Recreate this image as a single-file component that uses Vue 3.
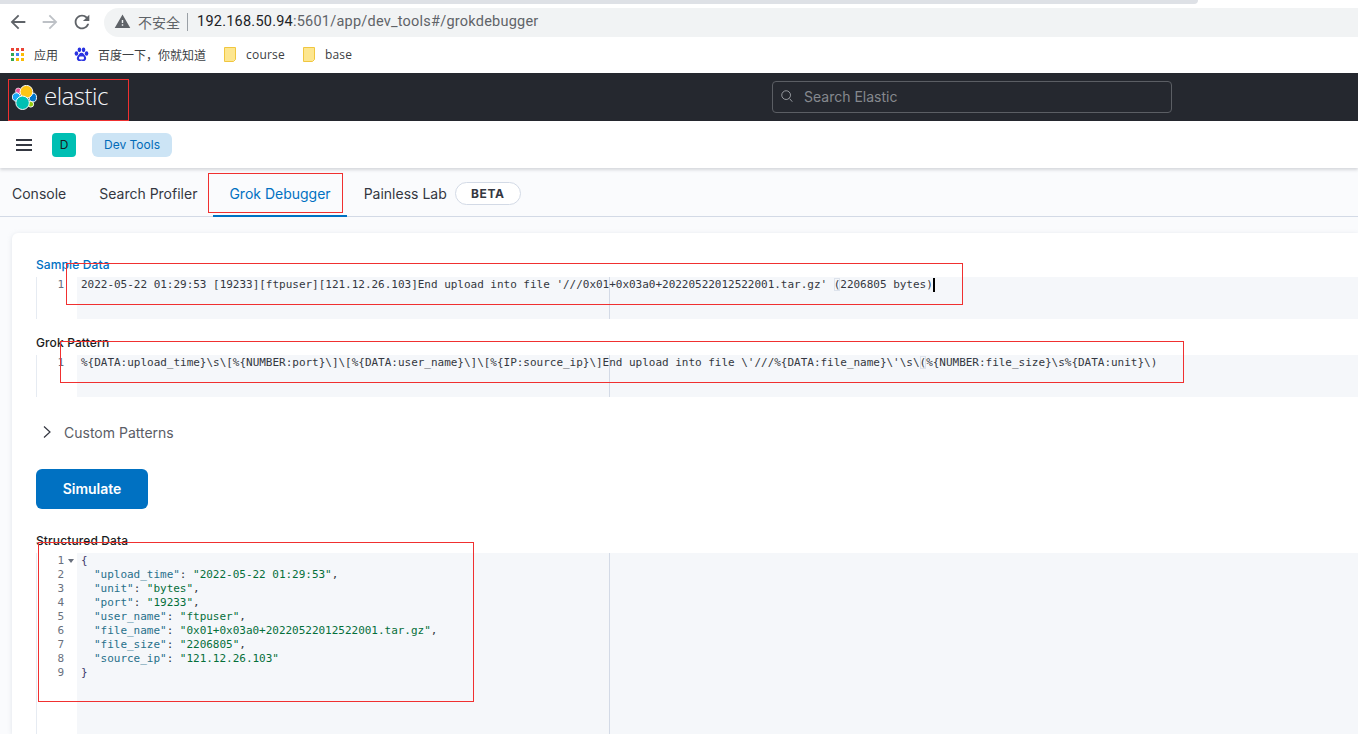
<script setup>
const sampleA = "2022-05-22 01:29:53 [19233][ftpuser][121.12.26.103]End upload into file '///0x01+0x03a0+20220522012522001.tar.gz' ";
const sampleB = "2206805 bytes)";
const patternA = "%{DATA:upload_time}\\s\\[%{NUMBER:port}\\]\\[%{DATA:user_name}\\]\\[%{IP:source_ip}\\]End upload into file \\'///%{DATA:file_name}\\'\\s\\";
const patternB = "%{NUMBER:file_size}\\s%{DATA:unit}\\)";
const json = [
  { k: "upload_time", v: "2022-05-22 01:29:53", c: "," },
  { k: "unit", v: "bytes", c: "," },
  { k: "port", v: "19233", c: "," },
  { k: "user_name", v: "ftpuser", c: "," },
  { k: "file_name", v: "0x01+0x03a0+20220522012522001.tar.gz", c: "," },
  { k: "file_size", v: "2206805", c: "," },
  { k: "source_ip", v: "121.12.26.103", c: "" },
];
const bookmarks = ["course", "base"];
const apps = ["#ea4335","#ea4335","#ea4335","#34a853","#4285f4","#fbbc05","#34a853","#fbbc05","#fbbc05"];
const tabs = ["Console", "Search Profiler", "Grok Debugger", "Painless Lab"];
</script>

<template>
  <div class="page">
    <div class="strip"></div>
    <div class="toolbar">
      <svg class="nav" viewBox="0 0 24 24" fill="#5f6368"><path d="M20 11H7.830l5.590-5.590L12 4l-8 8 8 8 1.410-1.410L7.830 13H20v-2z"/></svg>
      <svg class="nav" viewBox="0 0 24 24" fill="#bdc1c6"><path d="M12 4l-1.410 1.410L16.170 11H4v2h12.170l-5.580 5.590L12 20l8-8z"/></svg>
      <svg class="nav" viewBox="0 0 24 24" fill="#5f6368"><path d="M17.650 6.350C16.200 4.900 14.210 4 12 4c-4.420 0-7.990 3.580-7.990 8s3.570 8 7.990 8c3.730 0 6.840-2.550 7.730-6h-2.080c-.82 2.330-3.040 4-5.650 4-3.310 0-6-2.690-6-6s2.690-6 6-6c1.660 0 3.140.69 4.220 1.780L13 11h7V4l-2.350 2.350z"/></svg>
      <div class="omni">
        <svg class="warn" viewBox="0 0 24 24" fill="#5f6368"><path d="M1 21h22L12 2 1 21zm12-3h-2v-2h2v2zm0-4h-2v-4h2v4z"/></svg>
        <span class="insecure">不安全</span>
        <span class="sep"></span>
        <span class="url"><span class="host">192.168.50.94</span>:5601/app/dev_tools#/grokdebugger</span>
      </div>
    </div>
    <div class="bookmarks">
      <span class="apps"><i v-for="(c, i) in apps" :key="i" :style="{ background: c }"></i></span>
      <span class="bm first">应用</span>
      <svg class="paw" viewBox="0 0 16 16" fill="#2932e1">
        <ellipse cx="2.600" cy="7" rx="1.900" ry="2.400"/>
        <ellipse cx="5.800" cy="3" rx="1.900" ry="2.500"/>
        <ellipse cx="10.200" cy="3" rx="1.900" ry="2.500"/>
        <ellipse cx="13.400" cy="7" rx="1.900" ry="2.400"/>
        <path d="M8 6.200c-2.200 0-2.800 2-4.200 3.600-1.500 1.700-.7 5.200 2 5.200 1 0 1.400-.3 2.200-.3s1.200.3 2.200.3c2.700 0 3.500-3.500 2-5.200C10.800 8.200 10.200 6.200 8 6.200z"/>
        <rect x="5.400" y="10" width="5.200" height="3.400" rx="1.200" fill="#fff"/>
      </svg>
      <span class="bm">百度一下，你就知道</span>
      <template v-for="b in bookmarks" :key="b">
        <svg class="folder" viewBox="0 0 12 15"><path d="M.5.500h11v12l-2 2h-9z" fill="#fde68f" stroke="#f0c640"/></svg>
        <span class="bm latin">{{ b }}</span>
      </template>
    </div>

    <header class="kbn-top">
      <div class="logo">
        <svg class="logo-mark" viewBox="0 0 26 26">
          <circle cx="6.500" cy="6" r="2.800" fill="#f04e98" stroke="#fff" stroke-width=".7"/>
          <ellipse cx="4.500" cy="12.500" rx="4.200" ry="4.400" fill="#1ba9f5" stroke="#fff" stroke-width="1"/>
          <ellipse cx="21.700" cy="13" rx="3.800" ry="4.600" fill="#0077cc" stroke="#fff" stroke-width="1"/>
          <circle cx="15" cy="7" r="6.600" fill="#fec514" stroke="#fff" stroke-width="1"/>
          <circle cx="19.500" cy="20" r="3" fill="#93c90e" stroke="#fff" stroke-width="1"/>
          <circle cx="11" cy="18.500" r="7" fill="#00bfb3" stroke="#fff" stroke-width="1"/>
        </svg>
        <span class="logo-text">elastic</span>
      </div>
      <div class="search">
        <svg class="search-ic" viewBox="0 0 16 16" fill="none" stroke="#a5a8ae" stroke-width="1"><circle cx="7" cy="7" r="5"/><path d="M11 11l3 3.500"/></svg>
        <span>Search Elastic</span>
      </div>
    </header>

    <div class="subnav">
      <span class="burger"><i></i><i></i><i></i></span>
      <span class="space">D</span>
      <span class="crumb">Dev Tools</span>
    </div>

    <nav class="tabs">
      <a v-for="t in tabs" :key="t" class="tab" :class="{ active: t === 'Grok Debugger' }">{{ t }}</a>
      <span class="beta">BETA</span>
    </nav>

    <main class="body">
      <section class="panel">
        <label class="lbl blue">Sample Data</label>
        <div class="editor short">
          <div class="gutter"><div class="ln">1</div></div>
          <div class="code"><div class="margin"></div><div class="row">{{ sampleA }}<span class="match">(</span>{{ sampleB }}<span class="cursor"></span></div></div>
        </div>

        <label class="lbl second">Grok Pattern</label>
        <div class="editor short">
          <div class="gutter"><div class="ln">1</div></div>
          <div class="code"><div class="margin"></div><div class="row">{{ patternA }}<span class="match">(</span>{{ patternB }}</div></div>
        </div>

        <div class="custom">
          <svg class="chev" viewBox="0 0 10 16" fill="none" stroke="#343741" stroke-width="1.200"><path d="M2 2.500l6 5.500-6 5.500"/></svg>
          <span>Custom Patterns</span>
        </div>

        <button class="simulate" type="button">Simulate</button>

        <label class="lbl third">Structured Data</label>
        <div class="editor tall">
          <div class="gutter">
            <div v-for="n in 9" :key="n" class="ln">{{ n }}<span v-if="n === 1" class="fold"></span></div>
          </div>
          <div class="code">
            <div class="margin"></div>
            <div class="row"><span class="brace">{</span></div>
            <div v-for="r in json" :key="r.k" class="row indent"><span class="key">"{{ r.k }}"</span>: <span class="str">"{{ r.v }}"</span>{{ r.c }}</div>
            <div class="row"><span class="brace">}</span></div>
          </div>
        </div>
      </section>
    </main>

    <div class="mark m-logo"></div>
    <div class="mark m-tab"></div>
    <div class="mark m-sample"></div>
    <div class="mark m-pattern"></div>
    <div class="mark m-json"></div>
  </div>
</template>

<style>
html, body { margin: 0; overflow: hidden; background: #fff; }
</style>

<style scoped>
.page {
  position: relative;
  width: 1358px;
  height: 734px;
  overflow: hidden;
  display: flex;
  flex-direction: column;
  font-family: Inter, "Noto Sans CJK SC", sans-serif;
  color: #343741;
}
.strip { flex: none; width: 1198px; height: 4px; background: #dee1e6; border-bottom-right-radius: 5px; }

.toolbar { flex: none; height: 37px; display: flex; align-items: flex-start; }
.nav { flex: none; width: 22px; height: 22px; margin: 7px 0 0 7px; }
.nav:nth-child(2) { margin-left: 10px; }
.nav:nth-child(3) { margin-left: 10px; }
.omni {
  flex: 1;
  height: 29px;
  box-sizing: border-box;
  margin: 4px 0 0 11px;
  padding: 0 0 2px 10px;
  background: #f1f3f4;
  border-radius: 15px 0 0 15px;
  display: flex;
  align-items: center;
  font-family: "Noto Sans CJK SC", sans-serif;
}
.warn { width: 17px; height: 17px; flex: none; }
.insecure { font-size: 14px; color: #5f6368; margin-left: 7px; }
.sep { width: 1px; height: 18px; background: #9aa0a6; margin: 0 9px 0 7px; }
.url { font-family: Roboto, sans-serif; font-size: 14.500px; color: #5f6368; letter-spacing: .23px; }
.host { color: #202124; }

.bookmarks { flex: none; height: 32px; box-sizing: border-box; padding: 0 0 6px 11px; display: flex; align-items: center; font-family: "Noto Sans CJK SC", sans-serif; }
.apps { width: 13px; height: 13px; display: grid; grid-template-columns: repeat(3, 3px); grid-auto-rows: 3px; gap: 2px; flex: none; }
.bm { font-size: 12px; color: #3c4043; white-space: nowrap; }
.bm.first { margin-left: 10px; }
.paw { width: 15px; height: 15px; margin-left: 16px; flex: none; }
.paw + .bm { margin-left: 9px; }
.folder { width: 12px; height: 15px; flex: none; margin-left: 18px; }
.bm.latin { font-family: "Open Sans", sans-serif; letter-spacing: .2px; margin-left: 10px; }

.kbn-top { flex: none; height: 48px; background: #25282f; display: flex; align-items: center; position: relative; }
.logo { display: flex; align-items: center; padding-left: 12px; width: 760px; box-sizing: border-box; }
.logo-mark { width: 25px; height: 25px; flex: none; }
.logo-text { color: #f5f7fa; font-family: "Open Sans", sans-serif; font-weight: 300; font-size: 24px; margin-left: 7px; letter-spacing: -.5px; line-height: 24px; padding-bottom: 2px; }
.search {
  width: 400px; height: 32px; margin-left: 12px; box-sizing: border-box;
  border: 1px solid #5b5e64; border-radius: 4px;
  display: flex; align-items: center; padding: 0 0 2px 7px;
  color: #85888e; font-size: 14px;
}
.search-ic { width: 14px; height: 14px; margin-right: 10px; flex: none; }

.subnav {
  flex: none; height: 47px; background: #fff; display: flex; align-items: center; padding-left: 16px;
  box-shadow: 0 2px 3px rgba(52, 55, 65, .18); position: relative; z-index: 1;
}
.burger { width: 16px; display: flex; flex-direction: column; gap: 3px; flex: none; }
.burger i { display: block; height: 2px; background: #343741; }
.space { width: 24px; height: 24px; margin-left: 20px; border-radius: 4px; background: #00bfb3; display: flex; align-items: center; justify-content: center; font-size: 12px; color: #1a1c21; }
.crumb { width: 80px; height: 24px; margin-left: 16px; border-radius: 6px; background: #cce4f5; color: #006bb8; font-size: 12px; display: flex; align-items: center; justify-content: center; }

.tabs { flex: none; height: 49px; box-sizing: border-box; background: #fafbfd; border-bottom: 1px solid #d3dae6; display: flex; align-items: stretch; }
.tab { padding: 2px 16px 0; font-size: 14px; display: flex; align-items: center; color: #343741; position: relative; }
.tab:first-child { padding-left: 12px; padding-right: 17px; }
.tab.active { color: #0071c2; }
.tab.active::after { content: ""; position: absolute; left: 0; right: 0; bottom: -1px; height: 2px; background: #0071c2; }
.tab.active + .tab { margin-left: 1px; }
.beta { align-self: center; margin: 2px 0 0 -8px; width: 66px; height: 23px; box-sizing: border-box; border: 1px solid #d3dae6; border-radius: 12px; background: #fff; font-size: 12px; font-weight: 700; letter-spacing: .6px; display: flex; align-items: center; justify-content: center; color: #343741; }

.body { flex: 1; min-height: 0; background: #fafbfd; padding: 16px 0 0 12px; }
.panel { height: 100%; background: #fff; border-radius: 6px 0 0 0; box-shadow: 0 1px 5px rgba(152, 162, 179, .25); padding: 24px 0 0 24px; box-sizing: border-box; overflow: hidden; }

.lbl { display: block; height: 20px; font-size: 12px; font-weight: 500; line-height: 15px; color: #1a1c21; letter-spacing: .12px; }
.lbl.blue { color: #0071c2; }
.lbl.second { margin-top: 16px; }
.lbl.third { margin-top: 24px; }

.editor { display: flex; font-family: "DejaVu Sans Mono", monospace; font-size: 11px; line-height: 14px; letter-spacing: -.02px; }
.editor.short { height: 42px; }
.editor.tall { height: 190px; }
.gutter { flex: none; width: 41px; box-sizing: border-box; padding-top: 1px; border-left: 1px solid #e6ebf2; color: #69707d; }
.ln { text-align: right; padding-right: 13px; position: relative; height: 14px; }
.fold { position: absolute; left: 31px; top: 5px; border: 3px solid transparent; border-top: 4px solid #69707d; border-bottom: 0; }
.code { flex: 1; position: relative; background: #f5f7fa; padding: 1px 0 0 4px; min-width: 0; color: #343741; }
.row { white-space: pre; height: 14px; position: relative; }
.indent { padding-left: 13px; }
.margin { position: absolute; left: 532px; top: 0; bottom: 0; width: 1px; background: #d3dae6; }
.cursor { display: inline-block; width: 2px; height: 14px; background: #000; vertical-align: top; }
.match { box-shadow: inset 0 0 0 1px #dde3ec; }
.key { color: #28708a; }
.str { color: #056f3a; }
.brace { color: #3f3a6b; }

.custom { display: flex; align-items: center; height: 20px; margin-top: 25px; font-size: 14px; color: #5a5d66; }
.chev { width: 10px; height: 16px; margin-left: 6px; margin-right: 12px; flex: none; }

.simulate {
  display: block; width: 112px; height: 40px; margin-top: 27px; border: 0; border-radius: 6px;
  background: #0071c2; color: #fff; font-family: Inter, sans-serif; font-size: 14px; font-weight: 600; padding: 0 0 2px;
}

.mark { position: absolute; border: 1px solid #f03030; box-sizing: border-box; pointer-events: none; z-index: 5; }
.m-logo { left: 8px; top: 79px; width: 121px; height: 42px; }
.m-tab { left: 208px; top: 173px; width: 135px; height: 40px; }
.m-sample { left: 66px; top: 263px; width: 897px; height: 42px; }
.m-pattern { left: 60px; top: 341px; width: 1124px; height: 42px; }
.m-json { left: 38px; top: 542px; width: 436px; height: 160px; }
</style>
